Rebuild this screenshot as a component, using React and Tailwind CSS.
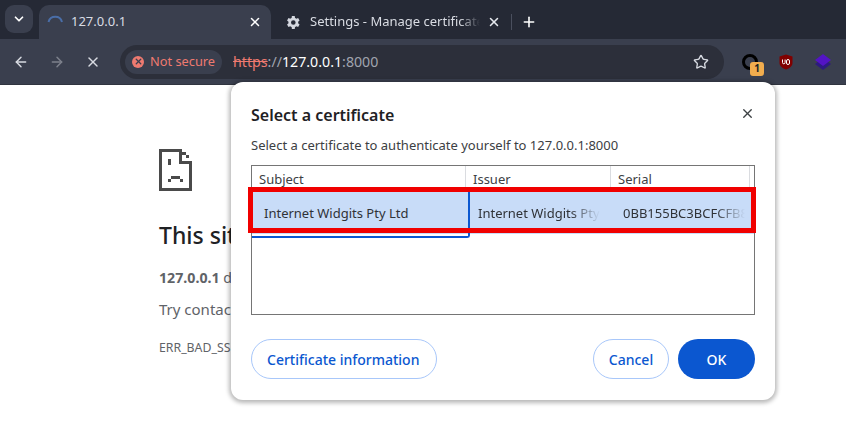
import React from "react";
import { ArrowLeft, ArrowRight, ChevronDown, Plus, Star, X } from "lucide-react";

const Gear = () => (
  <svg width="15" height="15" viewBox="0 0 24 24" fill="#d5d8e0">
    <path d="M19.4 13.3a7.6 7.6 0 0 0 0-2.6l2.3-1.8-2.3-4-2.8 1.1a8 8 0 0 0-2.2-1.3L14 1.7H9.4L9 4.7a8 8 0 0 0-2.2 1.3L4 4.9l-2.3 4L4 10.7a7.6 7.6 0 0 0 0 2.6l-2.3 1.8 2.3 4L6.8 18A8 8 0 0 0 9 19.3l.4 3H14l.4-3a8 8 0 0 0 2.2-1.3l2.8 1.1 2.3-4zM11.7 15.7a3.7 3.7 0 1 1 0-7.4 3.7 3.7 0 0 1 0 7.4z" />
  </svg>
);

// the pixel-art sad page from chrome's error screens
const SadPage = () => (
  <svg width="33" height="42" viewBox="0 0 33 42" fill="#4a4a4a" shapeRendering="crispEdges">
    <path d="M0 0h22v3H3v36h27V12h3v30H0z" />
    <path d="M20 0h3v12h10v3H20zM23 3h4v3h-4zM27 6h3v3h-3z" />
    <path d="M9 10h3v6H9zM9 30h3v3H9zM12 27h9v3h-9zM21 30h3v3h-3z" />
  </svg>
);

const Column = ({ title }) => (
  <div className="flex h-[23px] items-end pb-[1px] text-[13px] leading-[18px] text-[#3c4043]">{title}</div>
);

function CertificateDialog() {
  return (
    <div className="absolute left-[231px] top-[82px] z-10 flex h-[318px] w-[544px] flex-col rounded-[12px] bg-white px-[20px] pb-[21px] pt-[20px] shadow-[0_1px_4px_2px_rgba(0,0,0,0.28)]">
      <div className="flex items-center justify-between">
        <h2 className="text-[16px] font-semibold leading-[26px] text-[#1f2124]">Select a certificate</h2>
        <X size={15} strokeWidth={2.2} className="mb-[3px] text-[#3c4043]" />
      </div>
      <p className="mt-[7px] text-[13px] leading-[20px] text-[#3c4043]">
        Select a certificate to authenticate yourself to 127.0.0.1:8000
      </p>

      <div className="relative mt-[10px] h-[150px] border border-[#757575]">
        <div className="flex">
          <div className="w-[214px] border-r border-[#dadce0] pl-[7px]"><Column title="Subject" /></div>
          <div className="w-[145px] border-r border-[#dadce0] pl-[7px]"><Column title="Issuer" /></div>
          <div className="w-[139px] border-r border-[#dadce0] pl-[7px]"><Column title="Serial" /></div>
        </div>
        <div className="flex h-[45px] bg-[#c8dcf8] text-[13px] leading-[49px] text-[#2f3237]">
          <div className="h-[49px] w-[218px] rounded-br-[3px] border-b-2 border-r-2 border-[#0b57d0] pl-[12px]">Internet Widgits Pty Ltd</div>
          <div className="h-[45px] w-[145px] overflow-hidden whitespace-nowrap pl-[8px] [mask-image:linear-gradient(to_right,black_100px,transparent_130px)]">
            Internet Widgits Pty Ltd
          </div>
          <div className="h-[45px] w-[132px] overflow-hidden whitespace-nowrap pl-[8px] [mask-image:linear-gradient(to_right,black_100px,transparent_130px)]">
            0BB155BC3BCFCFB8
          </div>
        </div>
      </div>

      <div className="mt-auto flex items-center text-[14px] font-medium">
        <button className="h-[40px] rounded-full border border-[#a8c7fa] pl-[15px] pr-[17px] text-[#0b57d0]">Certificate information</button>
        <button className="ml-auto h-[40px] w-[76px] rounded-full border border-[#a8c7fa] text-[#0b57d0]">Cancel</button>
        <button className="ml-[9px] h-[40px] w-[77px] rounded-full bg-[#0b57d0] text-white">OK</button>
      </div>
    </div>
  );
}

export default function App() {
  return (
    <div className="relative h-[428px] w-[846px] overflow-hidden bg-white font-['Noto_Sans',sans-serif]">
      {/* Tab strip */}
      <div className="flex h-[39px] items-end bg-[#252935] pl-[5px] text-[13px] text-[#d9dce3]">
        <div className="mb-[6px] flex h-[28px] w-[28px] items-center justify-center rounded-[9px] bg-[#3a3f4e]">
          <ChevronDown size={14} strokeWidth={3} className="text-white" />
        </div>
        <div className="ml-[6px] flex h-[34px] w-[232px] items-center rounded-t-[10px] bg-[#3a3f4e] pl-[8px] pr-[9px]">
          <svg width="16" height="16" viewBox="0 0 16 16" fill="none" className="shrink-0">
            <path d="M1.5 8A7 7 0 0 1 15 8" stroke="#4a6ea8" strokeWidth="2" />
          </svg>
          <span className="ml-[8px]">127.0.0.1</span>
          <X size={14} strokeWidth={2.6} className="ml-auto text-white" />
        </div>
        <div className="flex h-[34px] w-[240px] items-center pl-[15px]">
          <Gear />
          <span className="ml-[9px] w-[170px] overflow-hidden whitespace-nowrap [mask-image:linear-gradient(to_right,black_150px,transparent_170px)]">
            Settings - Manage certificates
          </span>
          <X size={14} strokeWidth={2.6} className="ml-[7px] text-[#e6e8ee]" />
        </div>
        <div className="mb-[9px] h-[16px] w-[1px] bg-[#4a4f5e]" />
        <Plus size={16} strokeWidth={2.4} className="mb-[9px] ml-[9px] text-white" />
      </div>

      {/* Toolbar */}
      <div className="flex h-[46px] items-center border-b border-[#30343f] bg-[#3a3f4e] pb-[6px] pt-[6px]">
        <ArrowLeft size={16} strokeWidth={2.2} className="ml-[13px] text-[#d8dbe2]" />
        <ArrowRight size={16} strokeWidth={2.2} className="ml-[20px] text-[#7d818c]" />
        <X size={16} strokeWidth={2.2} className="ml-[20px] text-[#d8dbe2]" />
        <div className="ml-[19px] flex h-[34px] w-[604px] items-center rounded-full bg-[#2c2f3a] pl-[5px] pr-[15px] text-[14.2px]">
          <div className="flex h-[24px] items-center rounded-full bg-[#3a3f4e] px-[7px] text-[13px] text-[#ee7a70]">
            <span className="flex h-[12px] w-[12px] items-center justify-center rounded-full bg-[#ee7a70]">
              <X size={9} strokeWidth={3.5} className="text-[#3a3f4e]" />
            </span>
            <span className="ml-[6px] text-[12.8px]">Not secure</span>
          </div>
          <span className="ml-[11px] text-[#ee7a70] line-through">https</span>
          <span className="text-[#a0a4ae]">://</span>
          <span className="text-white">127.0.0.1</span>
          <span className="text-[#a0a4ae]">:8000</span>
          <Star size={16} strokeWidth={2} className="ml-auto text-[#d8dbe2]" />
        </div>
        <div className="relative ml-[18px] h-[16px] w-[16px] rounded-full border-[3px] border-black">
          <span className="absolute left-[5px] top-[5px] flex h-[14px] w-[14px] items-center justify-center rounded-[3px] bg-[#f2ad4e] text-[10px] font-bold text-[#202124]">1</span>
        </div>
        <svg width="14" height="16" viewBox="0 0 14 16" className="ml-[21px]">
          <path d="M7 0.5 13.5 2.5V9c0 3-3 5.500-6.500 6.500C3.500 14.500.5 12 .5 9V2.500z" fill="#800000" />
          <path d="M3.500 5.500v3a1.300 1.300 0 0 0 2.600 0v-3M7.500 7a1.500 1.500 0 1 1 3 0v2a1.500 1.500 0 1 1-3 0z" fill="none" stroke="#fff" strokeWidth="1" />
        </svg>
        <svg width="16" height="16" viewBox="0 0 16 16" className="ml-[22px]">
          <path d="M8 4 16 10 8 16 0 10z" fill="#2d1a80" />
          <path d="M8 0 16 6 8 12 0 6z" fill="#5314c4" />
        </svg>
      </div>

      {/* Error page behind the dialog */}
      <div className="pl-[159px] pt-[64px] text-[#5f6368]">
        <SadPage />
        <h1 className="mt-[30px] whitespace-nowrap text-[23px] font-medium leading-[28px] text-[#202124]">This site can't provide a secure connection</h1>
        <p className="mt-[19px] whitespace-nowrap text-[14.2px] leading-[20px]">
          <b className="font-bold">127.0.0.1</b> didn't accept your login certificate, or one may not have been provided.
        </p>
        <p className="mt-[11px] text-[15px] leading-[20px]">Try contacting the system admin.</p>
        <p className="mt-[21px] whitespace-nowrap text-[12.3px] leading-[16px]">ERR_BAD_SSL_CLIENT_AUTH_CERT</p>
      </div>

      <CertificateDialog />

      {/* Red annotation drawn over the screenshot */}
      <div className="absolute left-[248px] top-[187px] z-20 h-[46px] w-[508px] border-[5px] border-[#f00000]" />
    </div>
  );
}
